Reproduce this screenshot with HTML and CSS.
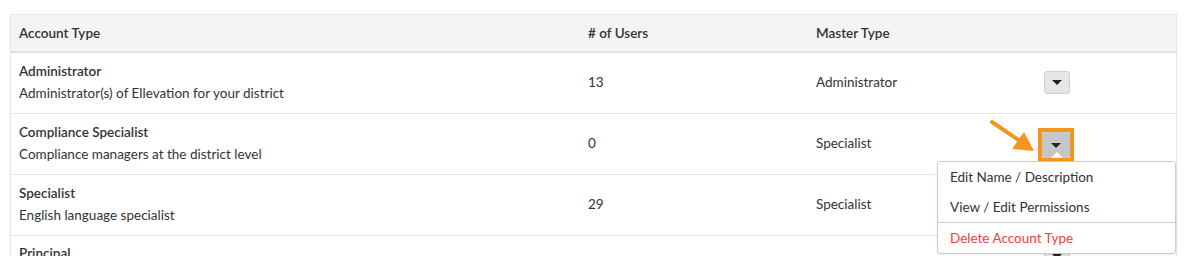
FILE: index.html
```html
<!DOCTYPE html>
<html lang="en">
<head>
    <meta charset="UTF-8">
    <title>Account Types</title>
    <link rel="stylesheet" href="styles.css">
</head>
<body>

    <!-- Account types table -->
    <table class="account-table">
        <thead>
            <tr>
                <th class="col-type">Account Type</th>
                <th class="col-users"># of Users</th>
                <th class="col-master">Master Type</th>
                <th class="col-actions"></th>
            </tr>
        </thead>
        <tbody>
            <tr>
                <td>
                    <div class="type-name">Administrator</div>
                    <div class="type-desc">Administrator(s) of Ellevation for your district</div>
                </td>
                <td>13</td>
                <td>Administrator</td>
                <td><button class="caret-button"><span class="caret"></span></button></td>
            </tr>
            <tr>
                <td>
                    <div class="type-name">Compliance Specialist</div>
                    <div class="type-desc">Compliance managers at the district level</div>
                </td>
                <td>0</td>
                <td>Specialist</td>
                <td class="actions-open">
                    <svg class="pointer-arrow" width="50" height="36" viewBox="0 0 50 36">
                        <line x1="2" y1="3" x2="30" y2="22" stroke="#f7941d" stroke-width="4" stroke-linecap="round"/>
                        <polygon points="44,32 22,30 34,13" fill="#f7941d"/>
                    </svg>
                    <span class="highlight">
                        <button class="caret-button open"><span class="caret"></span></button>
                    </span>
                    <ul class="dropdown-menu">
                        <li><a href="#">Edit Name / Description</a></li>
                        <li><a href="#">View / Edit Permissions</a></li>
                        <li class="divider"></li>
                        <li><a href="#" class="danger">Delete Account Type</a></li>
                    </ul>
                </td>
            </tr>
            <tr>
                <td>
                    <div class="type-name">Specialist</div>
                    <div class="type-desc">English language specialist</div>
                </td>
                <td>29</td>
                <td>Specialist</td>
                <td><button class="caret-button"><span class="caret"></span></button></td>
            </tr>
            <tr>
                <td class="last-row">
                    <div class="type-name">Principal</div>
                </td>
                <td></td>
                <td></td>
                <td class="last-row"><button class="caret-button"><span class="caret"></span></button></td>
            </tr>
        </tbody>
    </table>

</body>
</html>
```

FILE: styles.css
```css
/* Basic Styling */
html, body {
    margin: 0;
    padding: 0;
    background: #ffffff;
    color: #333;
    font-family: Lato, "Open Sans", sans-serif;
    font-size: 13.5px;
    overflow: hidden;
}

body {
    padding: 14px 11px 0 10px;
}

/* Table */
.account-table {
    width: 1167px;
    border-collapse: collapse;
    border: 1px solid #e6e6e6;
}

.account-table th {
    background: #f4f4f4;
    font-weight: 600;
    text-align: left;
    height: 36px;
    padding: 0 8px;
    border-bottom: 2px solid #e2e2e2;
}

.account-table td {
    height: 58px;
    padding: 0 8px 2px;
    border-top: 1px solid #e6e6e6;
    vertical-align: middle;
}

.account-table td.last-row {
    vertical-align: top;
    padding-top: 9px;
}

.col-type { width: 553px; }
.col-users { width: 212px; }
.col-master { width: 212px; }

.type-name {
    font-weight: 600;
    margin-bottom: 6px;
}

/* Caret buttons */
.caret-button {
    width: 26px;
    height: 23px;
    padding: 0;
    margin: 0;
    background: #e6e6e6;
    border: 1px solid #cfcfcf;
    border-radius: 3px;
    display: flex;
    align-items: center;
    justify-content: center;
    cursor: pointer;
}

.caret {
    width: 0;
    height: 0;
    border-left: 5px solid transparent;
    border-right: 5px solid transparent;
    border-top: 5px solid #222;
}

.caret-button.open {
    background: #c6c6c6;
    border: 1px solid #b8cfe8;
    border-radius: 2px;
    width: 28px;
    height: 26px;
    position: relative;
}

/* notch of the open menu */
.caret-button.open::after {
    content: "";
    position: absolute;
    left: 8px;
    bottom: -1px;
    border-left: 6px solid transparent;
    border-right: 6px solid transparent;
    border-bottom: 6px solid #ffffff;
}

.actions-open {
    position: relative;
}

.highlight {
    display: inline-block;
    border: 4px solid #f7941d;
    margin-left: -6px;
    margin-top: 4px;
}

.pointer-arrow {
    position: absolute;
    left: -46px;
    top: 5px;
}

/* Dropdown menu */
.dropdown-menu {
    position: absolute;
    top: 47px;
    right: 0;
    width: 237px;
    margin: 0;
    padding: 0;
    list-style: none;
    background: #ffffff;
    border: 1px solid #cccccc;
    border-radius: 3px;
    box-shadow: 0 1px 3px rgba(0, 0, 0, 0.08);
    z-index: 2;
}

.dropdown-menu li a {
    display: block;
    padding: 0 12px;
    height: 30px;
    line-height: 30px;
    color: #333;
    text-decoration: none;
}

.dropdown-menu li.divider {
    border-top: 1px solid #cccccc;
    margin: 0;
}

.dropdown-menu li a.danger {
    color: #e8443a;
}
```
